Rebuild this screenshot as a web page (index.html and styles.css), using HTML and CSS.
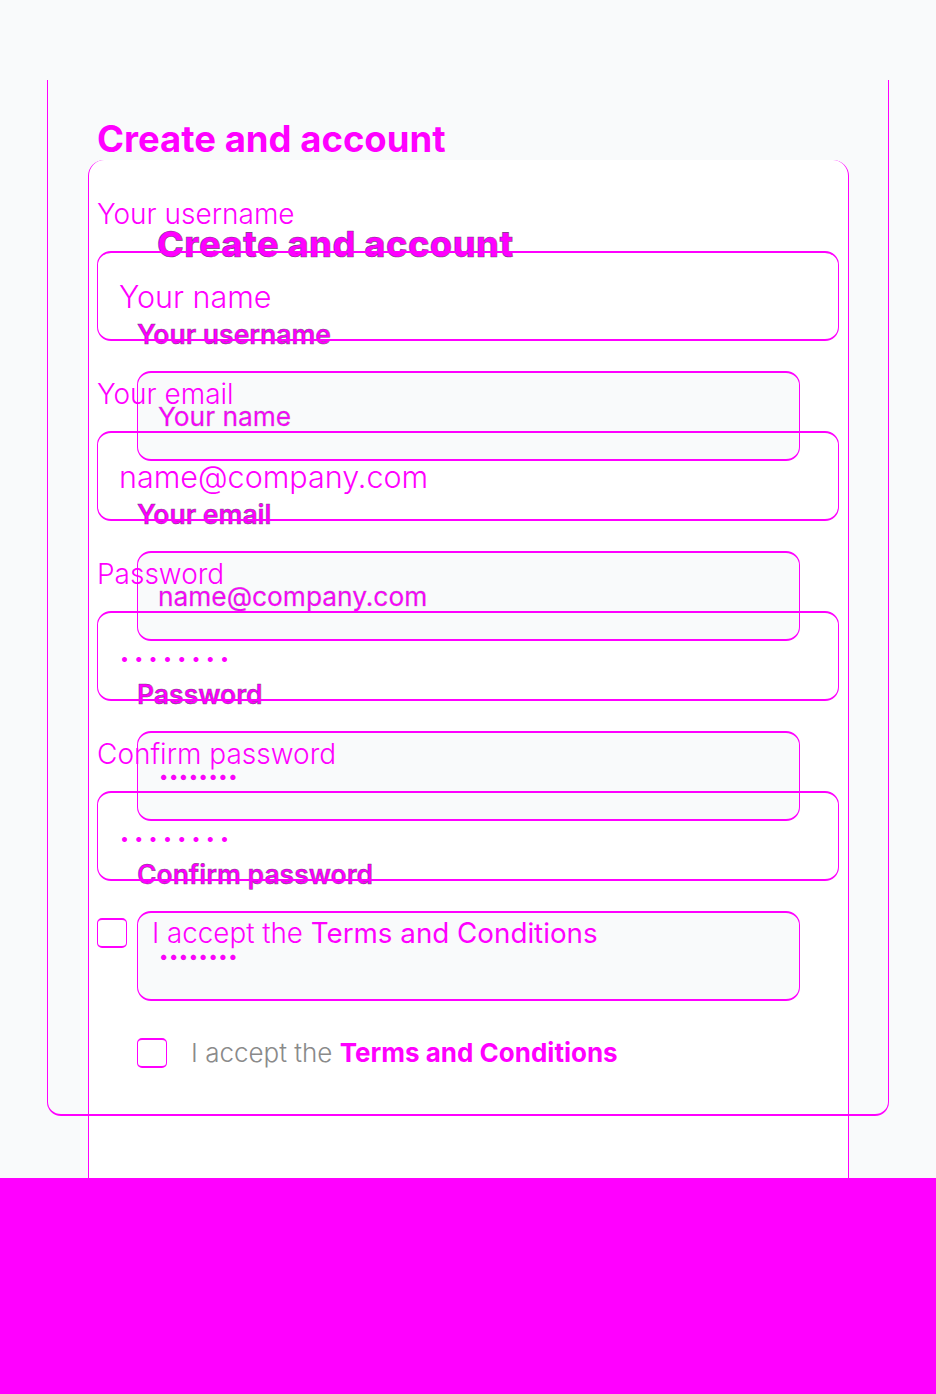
FILE: index.html
```html
<!DOCTYPE html>
<html lang="en">
<head>
<meta charset="utf-8">
<title>Create and account</title>
<link rel="stylesheet" href="styles.css">
</head>
<body>
<div class="stage">
  <section class="card">
    <h1 class="card-title">Create and account</h1>
    <div class="fields">
      <div class="field">
        <label class="b-label">Your username</label>
        <div class="b-input"><span class="b-ph">Your name</span></div>
      </div>
      <div class="field">
        <label class="b-label">Your email</label>
        <div class="b-input"><span class="b-ph">name@company.com</span></div>
      </div>
      <div class="field">
        <label class="b-label">Password</label>
        <div class="b-input"><span class="b-dots">••••••••</span></div>
      </div>
      <div class="field">
        <label class="b-label">Confirm password</label>
        <div class="b-input"><span class="b-dots">••••••••</span></div>
      </div>
      <div class="check-row b-check-row">
        <span class="box"></span>
        <span class="b-check-text"><span class="b-light">I accept the </span><span class="b-link">Terms and Conditions</span></span>
      </div>
    </div>
  </section>

  <section class="ghost">
    <h1 class="ghost-title">Create and account</h1>
    <div class="fields">
      <div class="field">
        <label class="a-label">Your username</label>
        <div class="a-input"><span class="a-val">Your name</span></div>
      </div>
      <div class="field">
        <label class="a-label">Your email</label>
        <div class="a-input"><span class="a-val">name@company.com</span></div>
      </div>
      <div class="field">
        <label class="a-label">Password</label>
        <div class="a-input"><span class="a-dots">••••••••</span></div>
      </div>
      <div class="field">
        <label class="a-label">Confirm password</label>
        <div class="a-input"><span class="a-dots">••••••••</span></div>
      </div>
      <div class="check-row a-check-row">
        <span class="box"></span>
        <span class="a-check-text"><span class="a-light">I accept the </span><span class="a-link">Terms and Conditions</span></span>
      </div>
    </div>
  </section>
</div>
<div class="band"></div>
</body>
</html>
```

FILE: styles.css
```css
* { box-sizing: border-box; }

html, body {
  margin: 0;
  padding: 0;
}

body {
  background: #f9fafb;
  font-family: Inter, "Liberation Sans", sans-serif;
  color: #ff00ff;
  width: 936px;
  height: 1394px;
  overflow: hidden;
}

.stage {
  display: grid;
  grid-template-columns: 1fr;
  grid-template-rows: auto;
}

/* ---------- layer B : the white card ---------- */
.card {
  grid-area: 1 / 1;
  margin: 160px 0 0 88px;
  width: 761px;
  height: 1018px;
  background: #ffffff;
  border-left: 1px solid #ff00ff;
  border-right: 1px solid #ff00ff;
  border-radius: 16px 16px 0 0;
  padding: 62px 48px 0 48px;
}

.card-title {
  margin: 0 0 52px 20px;
  font-size: 36px;
  line-height: 44px;
  font-weight: 800;
  letter-spacing: 0.5px;
  color: #ff00ff;
  -webkit-text-stroke: 0.6px rgba(70, 60, 80, 0.75);
}

.fields {
  display: flex;
  flex-direction: column;
  gap: 37px;
}

.field {
  display: flex;
  flex-direction: column;
  gap: 21px;
}

.b-label {
  display: block;
  font-size: 26.5px;
  line-height: 32px;
  font-weight: 600;
  -webkit-text-stroke: 0.5px rgba(70, 60, 80, 0.75);
}

.b-input {
  height: 90px;
  background: #f9fafb;
  border-style: solid;
  border-color: #ff00ff;
  border-width: 2px 1px;
  border-radius: 14px;
  display: flex;
  align-items: center;
  padding-left: 20px;
}

.b-ph {
  font-size: 26.3px;
  font-weight: 400;
  -webkit-text-stroke: 0.4px rgba(120, 120, 140, 0.6);
}

.b-dots {
  font-size: 16.5px;
  letter-spacing: 0.6px;
  padding-left: 1px;
  -webkit-text-stroke: 0.3px rgba(120, 120, 140, 0.6);
}

.check-row {
  display: flex;
  align-items: center;
  height: 30px;
}

.box {
  width: 30px;
  height: 30px;
  flex: none;
  border-style: solid;
  border-color: #ff00ff;
  border-width: 2px 1.5px;
  border-radius: 5px;
}

.b-check-row { gap: 24px; }

.b-check-text {
  font-size: 26px;
  line-height: 30px;
}

.b-light {
  color: #8a8a8a;
  font-weight: 300;
}

.b-link {
  color: #ff00ff;
  font-weight: 700;
}

/* ---------- layer A : the ghost outline over it ---------- */
.ghost {
  grid-area: 1 / 1;
  z-index: 1;
  margin: 80px 0 0 47px;
  width: 842px;
  height: 1036px;
  border-left: 1px solid #ff00ff;
  border-right: 1px solid #ff00ff;
  border-bottom: 2px solid #ff00ff;
  border-radius: 0 0 14px 14px;
  padding: 37px 49px 0 49px;
  pointer-events: none;
}

.ghost-title {
  margin: 0 0 37px 0;
  font-size: 36.5px;
  line-height: 44px;
  font-weight: 700;
  color: #ff00ff;
}

.a-label {
  display: block;
  font-size: 28px;
  line-height: 32px;
  font-weight: 300;
}

.a-input {
  height: 90px;
  border-style: solid;
  border-color: #ff00ff;
  border-width: 2px 1px;
  border-radius: 14px;
  display: flex;
  align-items: center;
  padding-left: 21px;
}

.a-val {
  font-size: 30.5px;
  font-weight: 300;
}

.a-dots {
  font-size: 16px;
  letter-spacing: 5.3px;
  padding-left: 1px;
  padding-top: 4px;
}

.a-check-row { gap: 25px; }

.a-check-text {
  font-size: 27.75px;
  line-height: 30px;
}

.a-light { font-weight: 300; }
.a-link { font-weight: 400; }

/* ---------- bottom band ---------- */
.band {
  height: 216px;
  background: #ff00ff;
}
```
